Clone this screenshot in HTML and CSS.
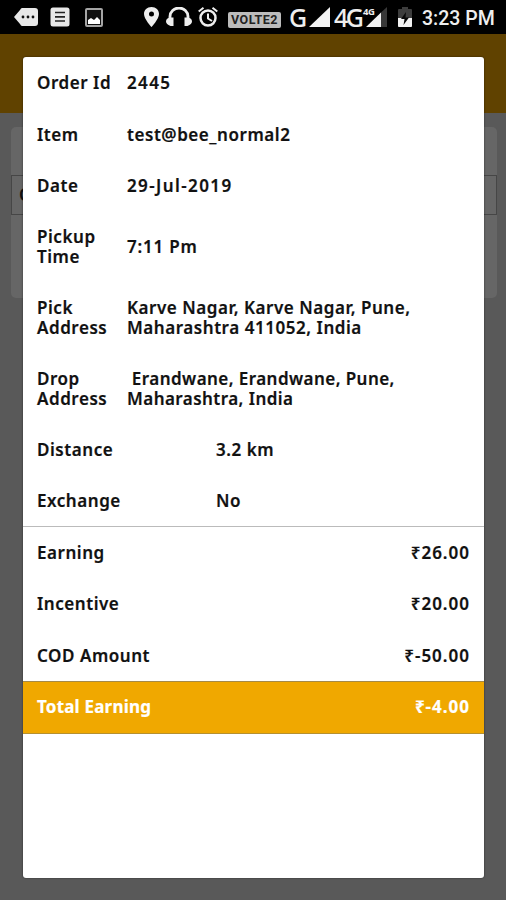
FILE: index.html
```html
<!DOCTYPE html>
<html lang="en">
<head>
<meta charset="utf-8">
<title>Order details</title>
<link rel="stylesheet" href="styles.css">
</head>
<body>
<header class="status">
  <div class="status-left">
    <svg width="25" height="20" viewBox="0 0 25 20"><path d="M8 1H21Q24 1 24 4V16Q24 19 21 19H8Q7 19 6 17L0 10 6 3Q7 1 8 1Z" fill="#e8e8e8"/><g fill="#111"><circle cx="9" cy="10" r="1.4"/><circle cx="14" cy="10" r="1.4"/><circle cx="19" cy="10" r="1.4"/></g></svg>
    <svg class="note" width="20" height="20" viewBox="0 0 20 20"><rect x=".5" y=".5" width="19" height="19" rx="2.5" fill="#e8e8e8"/><path d="M5 5.5H15M5 9.8H15M5 14H15" stroke="#222" stroke-width="1.7"/></svg>
    <svg class="photo" width="18" height="19" viewBox="0 0 18 19"><rect x="1" y="1" width="16" height="17" rx="1" stroke="#a5a5a5" stroke-width="2" fill="#101010"/><path d="M3 16V12L6 10 9 12 12 9 15 12V16Z" fill="#fff"/></svg>
  </div>
  <div class="status-right">
    <svg width="15" height="20" viewBox="0 0 15 20"><path fill-rule="evenodd" d="M7.5 0C3 0 0 3 0 7C0 12 7.500 20 7.500 20S15 12 15 7C15 3 12 0 7.500 0ZM7.500 4.500A2.500 2.500 0 1 1 7.500 9.500A2.500 2.500 0 1 1 7.500 4.500Z" fill="#eee"/></svg>
    <svg class="phones" width="26" height="20" viewBox="0 0 26 20"><path d="M4 12V9.500A9 8.500 0 0 1 22 9.500V12" fill="none" stroke="#eee" stroke-width="2.800"/><path d="M7.500 10.500V19H4.500Q0 17 0 14.500 0 11.500 3.500 10.500ZM18.500 10.500V19H21.500Q26 17 26 14.500 26 11.500 22.500 10.500Z" fill="#eee"/></svg>
    <svg class="alarm" width="20" height="20" viewBox="0 0 20 20"><circle cx="10" cy="11" r="7.500" fill="none" stroke="#eee" stroke-width="2.500"/><path d="M10 6.500V11.500L14 14M.7 4.500 5.500 .8M19.300 4.500 14.500 .8" fill="none" stroke="#eee" stroke-width="2"/></svg>
    <span class="volte">VOLTE2</span>
    <span class="net g">G</span>
    <svg class="sig1" width="21" height="20" viewBox="0 0 21 20"><path d="M0 20 21 0V20Z" fill="#f2f2f2"/></svg>
    <span class="net four">4G</span>
    <span class="lte"><span class="mini">4G</span><svg width="21" height="20" viewBox="0 0 21 20"><path d="M15 5.500 21 0V20H15Z" fill="#383838"/><path d="M0 20 15 5.500V20Z" fill="#f2f2f2"/></svg></span>
    <svg class="battery" width="14" height="20" viewBox="0 0 14 20"><path d="M4 0H10V2H13Q14 2 14 3V19Q14 20 13 20H1Q0 20 0 19V3Q0 2 1 2H4Z" fill="#3d3d3d"/><path d="M0 11H14V19Q14 20 13 20H1Q0 20 0 19Z" fill="#f2f2f2"/><path d="M8 5 3 12H6.500L5.500 18 11 10.500H7.500Z" fill="#080808"/></svg>
    <span class="clock">3:23 PM</span>
  </div>
</header>
<main class="page">
  <div class="appbar"></div>
  <div class="card"><div class="card-row">O</div></div>
</main>
<section class="modal">
  <div class="row"><span class="label">Order Id</span><span class="number">2445</span></div>
  <div class="row"><span class="label">Item</span><span class="item">test@bee_normal2</span></div>
  <div class="row"><span class="label">Date</span><span class="date">29-Jul-2019</span></div>
  <div class="row tall"><span class="label">Pickup<br>Time</span><span class="time">7:11 Pm</span></div>
  <div class="row tall"><span class="label">Pick<br>Address</span><span class="address">Karve Nagar, Karve Nagar, Pune,<br>Maharashtra 411052, India</span></div>
  <div class="row tall"><span class="label">Drop<br>Address</span><span class="drop">&nbsp;Erandwane, Erandwane, Pune,<br>Maharashtra, India</span></div>
  <div class="row wide"><span class="label">Distance</span><span>3.2 km</span></div>
  <div class="row wide"><span class="label">Exchange</span><span>No</span></div>
  <div class="row money first"><span>Earning</span><span class="amount">₹26.00</span></div>
  <div class="row money"><span>Incentive</span><span class="amount">₹20.00</span></div>
  <div class="row money"><span>COD Amount</span><span class="amount">₹-50.00</span></div>
  <div class="row money total"><span>Total Earning</span><span class="amount">₹-4.00</span></div>
</section>
</body>
</html>
```

FILE: styles.css
```css
* { box-sizing: border-box; }
body {
  margin: 0;
  height: 900px;
  overflow: hidden;
  background: #595959;
  font-family: "Noto Sans", "Open Sans", sans-serif;
}
svg { display: block; flex: none; }
.status {
  height: 34px;
  padding: 7px 11px 0 14px;
  background: #000;
  color: #eee;
  display: flex;
  justify-content: space-between;
}
.status-left, .status-right { display: flex; height: 20px; }
.note { margin-left: 11px; }
.photo { margin: 1px 0 0 15px; }
.phones { margin-left: 7px; }
.alarm { margin-left: 6px; }
.volte {
  margin: 5px 0 0 10px;
  width: 53px;
  height: 16px;
  border-radius: 2px;
  background: #bcbcbc;
  color: #222;
  font: 700 12.5px/16px Roboto, sans-serif;
  letter-spacing: .5px;
  text-align: center;
}
.net {
  font: 500 25px/20px "Noto Sans", sans-serif;
  white-space: nowrap;
}
.g { margin-left: 8px; width: 18px; }
.sig1 { margin-left: 2px; }
.four { margin-left: 4px; width: 29px; letter-spacing: -2.5px; }
.lte { position: relative; margin-left: 3px; }
.mini { position: absolute; left: -3px; top: 0; font: 700 9.5px/10px "Noto Sans", sans-serif; letter-spacing: -.5px; }
.battery { margin-left: 11px; }
.clock { margin-left: 10px; width: 73px; font: 500 19.5px/24px Roboto, sans-serif; white-space: nowrap; }
.appbar { height: 79px; background: #604200; }
.card {
  height: 171px;
  margin: 14px 9px 0 11px;
  padding-top: 48px;
  border-radius: 5px;
  background: #666;
}
.card-row {
  height: 40px;
  border: 1px solid #464646;
  padding-left: 7px;
  color: #111;
  font-weight: 600;
  font-size: 17px;
  line-height: 38px;
}
.modal {
  position: absolute;
  left: 23px;
  top: 57px;
  width: 461px;
  height: 821px;
  border-radius: 3px;
  background: #fff;
  box-shadow: 0 0 2px rgba(0, 0, 0, .6);
  color: #111;
  font-size: 17px;
  font-weight: 650;
  line-height: 19.6px;
  letter-spacing: .55px;
  -webkit-text-stroke: .2px currentColor;
}
.row {
  height: 51.3px;
  padding: 1px 14px 0 14px;
  display: grid;
  grid-template-columns: 90px 1fr;
  align-items: center;
  white-space: nowrap;
}
.tall { height: 70.9px; }
.wide { grid-template-columns: 179px 1fr; }
.number { letter-spacing: 1.4px; }
.date { letter-spacing: 1.4px; }
.time { letter-spacing: .8px; }
.drop { letter-spacing: .45px; }
.money { height: 51.5px; display: flex; justify-content: space-between; }
.amount { letter-spacing: 1px; }
.first { border-top: 1px solid #bbb; }
.total {
  height: 53px;
  padding-top: 0;
  background: #f0a800;
  border-top: 1px solid #a58a48;
  border-bottom: 1px solid #b59030;
  color: #fff;
  font-weight: 700;
  letter-spacing: .2px;
}
```
